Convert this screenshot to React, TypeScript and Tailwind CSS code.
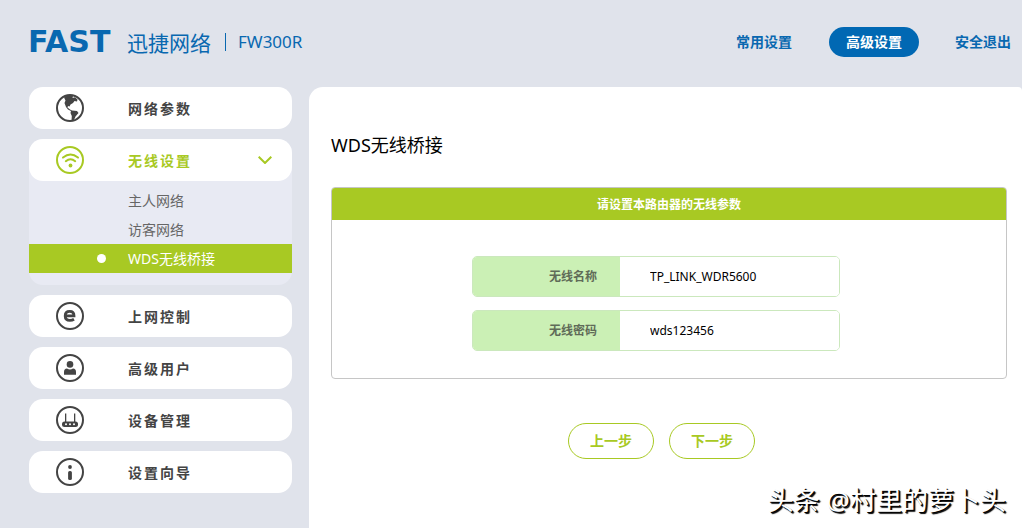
import type { ReactNode } from "react";

const ring = <circle cx="14" cy="14" r="13" fill="none" stroke="currentColor" strokeWidth="2" />;

function Icon({ children }: { children: ReactNode }) {
  return (
    <svg viewBox="0 0 28 28" className="h-7 w-7 shrink-0" fill="currentColor" aria-hidden="true">
      {ring}
      {children}
    </svg>
  );
}

const globe = (
  <Icon>
    <path d="M8 3.5 L11 1.5 L17 2 L16.5 4 L19 3.2 L21.5 5.5 L21 7.5 L18.5 7 L17 9 L14.5 10.5 L13.5 12.5 L12 12 L11.5 13.5 L14 15.5 L16 16.5 L21 17 L22.5 19 L19.5 22.5 L18 26 L15.5 27 L15.8 22 L14.5 19 L15 17 L12 15.5 L10 13 L8.5 9 L9.5 6.5 Z" />
  </Icon>
);

const wifi = (
  <Icon>
    <circle cx="14.5" cy="19.5" r="1.9" />
    <g fill="none" stroke="currentColor" strokeWidth="2" strokeLinecap="round">
      <path d="M7 11.6 Q14.5 5.4 22 11.6" />
      <path d="M9.8 15.2 Q14.5 11.2 19.2 15.2" />
    </g>
  </Icon>
);

const browser = (
  <Icon>
    <path
      d="M9.2 13.8 H18 C18 10.9 16.3 9.4 13.7 9.4 C11 9.4 9.2 11.2 9.2 13.9 C9.2 16.7 11.1 18.3 13.9 18.3 C15.5 18.3 16.9 17.9 18 17.2"
      fill="none"
      stroke="currentColor"
      strokeWidth="2.8"
    />
  </Icon>
);

const user = (
  <Icon>
    <circle cx="14" cy="10.4" r="3.3" />
    <path d="M8 20.8 V18 Q8 14.8 11 14.6 Q14 16.4 17 14.6 Q20 14.8 20 18 V20.8 Z" />
  </Icon>
);

const router = (
  <Icon>
    <path d="M9 7.5 h1.3 V16 H9 Z M18 7.5 h1.3 V16 H18 Z" />
    <rect x="6" y="15.5" width="16" height="5.5" rx="2.5" />
    <g fill="#fff">
      <circle cx="10" cy="18.2" r="1" />
      <circle cx="14" cy="18.2" r="1" />
      <circle cx="18" cy="18.2" r="1" />
    </g>
  </Icon>
);

const info = (
  <Icon>
    <circle cx="14" cy="9" r="1.9" />
    <rect x="12.1" y="13" width="3.8" height="9" rx="1.6" />
  </Icon>
);

function MenuItem({ icon, label, active = false }: { icon: ReactNode; label: string; active?: boolean }) {
  return (
    <button
      type="button"
      aria-expanded={active ? true : undefined}
      className={
        "flex h-[42px] w-full items-center rounded-[14px] bg-white pr-5 pl-[27px] text-left " +
        (active ? "text-[#a8c923]" : "text-[#444]")
      }
    >
      {icon}
      <span className="ml-11 flex-1 pt-px text-sm font-bold tracking-[2px]">{label}</span>
      {active && (
        <svg viewBox="0 0 14 8" className="h-2 w-3.5" fill="none" stroke="currentColor" strokeWidth="2" aria-hidden="true">
          <path d="M0.7 0.7 L7 7 L13.3 0.7" />
        </svg>
      )}
    </button>
  );
}

function SubItem({ label, active = false }: { label: string; active?: boolean }) {
  return (
    <li>
      <a
        href="#"
        aria-current={active ? "page" : undefined}
        className={
          "flex h-[29px] items-center pl-[68px] text-sm " + (active ? "bg-[#a8c923] text-white" : "text-[#666]")
        }
      >
        <span className={"mr-[22px] h-[9px] w-[9px] rounded-full " + (active ? "bg-white" : "")} />
        {label}
      </a>
    </li>
  );
}

function Field({ id, label, value }: { id: string; label: string; value: string }) {
  return (
    <div className="flex h-[41px] overflow-hidden rounded-[5px] border border-[#cbe8bd]">
      <label
        htmlFor={id}
        className="flex w-[147px] shrink-0 items-center justify-end bg-[#cbf0b5] pr-[23px] text-xs font-bold text-[#5f6b58]"
      >
        {label}
      </label>
      <input
        id={id}
        type="text"
        defaultValue={value}
        className="min-w-0 flex-1 bg-white pl-[30px] text-xs text-black outline-none"
      />
    </div>
  );
}

function StepButton({ label }: { label: string }) {
  return (
    <button
      type="button"
      className="h-9 w-[86px] rounded-full border border-[#a8c923] bg-white text-sm font-bold text-[#a8c923]"
    >
      {label}
    </button>
  );
}

export default function App() {
  return (
    <div className="relative flex min-h-screen flex-col bg-[#e0e3eb] font-['Noto_Sans','Noto_Sans_CJK_SC',sans-serif]">
      <header className="flex h-[87px] items-center justify-between pr-[11px] pb-[3px] pl-7">
        <div className="flex items-center text-[#0968b0]">
          <span className="w-[99px] font-['DejaVu_Sans',sans-serif] text-[30px] leading-7 font-bold">FAST</span>
          <span className="font-['Noto_Sans_CJK_SC',sans-serif] text-[21px] leading-7 font-normal">迅捷网络</span>
          <span className="mr-3 ml-[14px] h-[18px] w-px bg-[#0968b0]" />
          <span className="text-[17px]">FW300R</span>
        </div>
        <nav className="flex items-center text-sm font-bold text-[#0968b0]">
          <a href="#">常用设置</a>
          <a
            href="#"
            aria-current="page"
            className="mr-9 ml-[37px] flex h-[30px] w-[90px] items-center justify-center rounded-full bg-[#0168b3] text-white"
          >
            高级设置
          </a>
          <a href="#">安全退出</a>
        </nav>
      </header>

      <div className="flex flex-1 gap-[17px] pl-[29px]">
        <nav className="flex w-[263px] shrink-0 flex-col gap-[10px]">
          <MenuItem icon={globe} label="网络参数" />
          <div className="rounded-[14px] bg-[#e8eaf3] pb-3">
            <MenuItem icon={wifi} label="无线设置" active />
            <ul className="pt-[5px]">
              <SubItem label="主人网络" />
              <SubItem label="访客网络" />
              <SubItem label="WDS无线桥接" active />
            </ul>
          </div>
          <MenuItem icon={browser} label="上网控制" />
          <MenuItem icon={user} label="高级用户" />
          <MenuItem icon={router} label="设备管理" />
          <MenuItem icon={info} label="设置向导" />
        </nav>

        <main className="min-w-0 flex-1 rounded-t-[14px] rounded-tr-[4px] bg-white pt-11 pr-[15px] pl-[22px]">
          <h1 className="text-lg leading-7 text-black">WDS无线桥接</h1>
          <form>
            <section className="mt-7 overflow-hidden rounded-[4px] border border-[#c6c6c6]">
              <h2 className="flex h-8 items-center justify-center bg-[#a8c923] pt-px text-xs font-bold text-white">
                请设置本路由器的无线参数
              </h2>
              <div className="flex justify-center pt-9 pr-[26px] pb-[27px]">
                <div className="flex w-[368px] flex-col gap-[13px]">
                  <Field id="ssid" label="无线名称" value="TP_LINK_WDR5600" />
                  <Field id="password" label="无线密码" value="wds123456" />
                </div>
              </div>
            </section>
            <div className="mt-11 flex justify-center gap-[15px] pr-[15px]">
              <StepButton label="上一步" />
              <StepButton label="下一步" />
            </div>
          </form>
        </main>
      </div>

      <p className="pointer-events-none absolute right-4 bottom-3 text-[26px] leading-8 text-white [text-shadow:1px_1px_0_#000,2px_2px_1px_#000]">
        头条 @村里的萝卜头
      </p>
    </div>
  );
}
